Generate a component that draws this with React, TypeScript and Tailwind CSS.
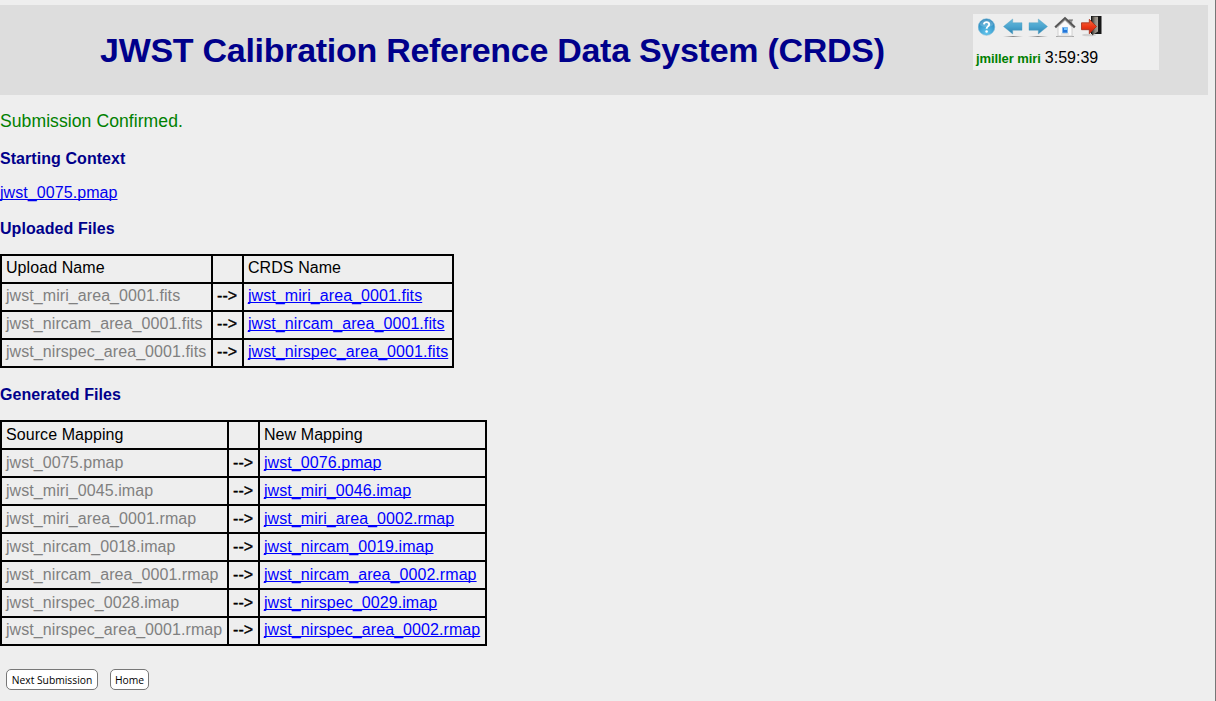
type Row = [string, string];

const uploaded: Row[] = [
  ['jwst_miri_area_0001.fits', 'jwst_miri_area_0001.fits'],
  ['jwst_nircam_area_0001.fits', 'jwst_nircam_area_0001.fits'],
  ['jwst_nirspec_area_0001.fits', 'jwst_nirspec_area_0001.fits'],
];

const generated: Row[] = [
  ['jwst_0075.pmap', 'jwst_0076.pmap'],
  ['jwst_miri_0045.imap', 'jwst_miri_0046.imap'],
  ['jwst_miri_area_0001.rmap', 'jwst_miri_area_0002.rmap'],
  ['jwst_nircam_0018.imap', 'jwst_nircam_0019.imap'],
  ['jwst_nircam_area_0001.rmap', 'jwst_nircam_area_0002.rmap'],
  ['jwst_nirspec_0028.imap', 'jwst_nirspec_0029.imap'],
  ['jwst_nirspec_area_0001.rmap', 'jwst_nirspec_area_0002.rmap'],
];

function Heading({ children, className }: { children: string; className: string }) {
  return <h3 className={`text-base leading-5 font-bold tracking-[0.06px] text-[#00008b] ${className}`}>{children}</h3>;
}

function FileTable({ left, right, rows, className, cols, low = false }: { left: string; right: string; rows: Row[]; className: string; cols: [string, string, string]; low?: boolean }) {
  const base = 'h-7 border-2 border-black p-0 pl-[4px] leading-5 whitespace-nowrap';
  const pad = (last: boolean) => (low && !last ? 'pb-0' : 'pb-[2px]');
  return (
    <table className={`table-fixed border-collapse tracking-[0.07px] ${className}`}>
      <colgroup>
        {cols.map((c, i) => (
          <col key={i} className={c} />
        ))}
      </colgroup>
      <tbody>
        <tr>
          <td className={`${base} ${pad(false)}`}>{left}</td>
          <td className={`${base} ${pad(false)}`} />
          <td className={`${base} ${pad(false)}`}>{right}</td>
        </tr>
        {rows.map(([from, to], i) => {
          const cell = `${base} ${pad(i === rows.length - 1)}`;
          return (
            <tr key={from}>
              <td className={`${cell} text-[#808080]`}>{from}</td>
              <td className={`${cell} [-webkit-text-stroke:0.35px_black]`}>{'-->'}</td>
              <td className={cell}>
                <a href="#" className="text-[#0000ff] underline [text-decoration-skip-ink:none]">{to}</a>
              </td>
            </tr>
          );
        })}
      </tbody>
    </table>
  );
}

function HelpIcon() {
  return (
    <svg width="18" height="20" viewBox="0 0 18 20">
      <defs>
        <radialGradient id="help" cx=".5" cy=".85" r=".8">
          <stop offset="0" stopColor="#62c5ed" />
          <stop offset=".65" stopColor="#3b9dce" />
          <stop offset="1" stopColor="#237fb6" />
        </radialGradient>
      </defs>
      <circle cx="8.5" cy="10" r="8.3" fill="url(#help)" stroke="#77b8d7" strokeWidth=".6" />
      <path d="M1.5 8a7.2 7.2 0 0 1 14 0Q8.5 12 1.5 8" fill="#fff" opacity=".2" />
      <path d="M5.9 7.4C6.2 4.3 11.3 4.4 11.2 7.4C11.1 9.5 8.7 9.3 8.6 11.8" fill="none" stroke="#fff" strokeWidth="1.9" />
      <circle cx="8.6" cy="14.4" r="1.25" fill="#fff" />
    </svg>
  );
}

function ArrowIcon({ forward = false }: { forward?: boolean }) {
  const id = forward ? 'forward' : 'back';
  return (
    <svg width="20" height="22" viewBox="0 0 20 22">
      <defs>
        <linearGradient id={id} x1="0" y1="0" x2="0" y2="1">
          <stop offset="0" stopColor="#69b9da" />
          <stop offset=".5" stopColor="#4ba5cf" />
          <stop offset="1" stopColor="#2d82b0" />
        </linearGradient>
        <linearGradient id={`${id}-shade`}>
          <stop offset="0" stopColor="#999" stopOpacity="0" />
          <stop offset=".5" stopColor="#888" />
          <stop offset="1" stopColor="#999" stopOpacity="0" />
        </linearGradient>
      </defs>
      <path d="M0 19h20v1H0z" fill={`url(#${id}-shade)`} />
      <path d={forward ? 'M19.5 9.5L10.3 2v3.7H1v7.6h9.3V17z' : 'M.5 9.5L9.7 2v3.7H19v7.6H9.7V17z'} fill={`url(#${id})`} stroke="#4d9fc3" strokeWidth=".4" />
    </svg>
  );
}

function HomeIcon() {
  return (
    <svg width="22" height="22" viewBox="0 0 22 22">
      <path d="M2 20.5h18" stroke="#aaa" strokeWidth="1" />
      <path d="M15 4h3.2v7H15z" fill="#999" />
      <path d="M14.5 4h4.5" stroke="#666" />
      <path d="M4 11L11 4.5l7 6.5v9H4z" fill="#fafafa" stroke="#c6c6c6" strokeWidth=".8" />
      <path d="M1.2 11.4L11 2.3l9.8 9.1" fill="none" stroke="#555" strokeWidth="2.3" />
      <path d="M2.4 11.4L11 3.5l8.6 7.9" fill="none" stroke="#999" strokeWidth=".6" />
      <path d="M8.5 11.5h5v5.5h-5z" fill="#2475d9" stroke="#79b5ec" />
      <path d="M10 12h3v2h-3z" fill="#70c5ff" />
      <path d="M7 18h8" stroke="#d5d5d5" />
    </svg>
  );
}

function ExitIcon() {
  return (
    <svg width="22" height="22" viewBox="0 0 22 22">
      <defs>
        <linearGradient id="door">
          <stop offset="0" stopColor="#383530" />
          <stop offset=".5" stopColor="#8d877e" />
          <stop offset="1" stopColor="#aaa49a" />
        </linearGradient>
        <linearGradient id="exit" x1="0" y1="0" x2="0" y2="1">
          <stop offset="0" stopColor="#f36e42" />
          <stop offset=".5" stopColor="#ed3918" />
          <stop offset="1" stopColor="#bd1d0b" />
        </linearGradient>
      </defs>
      <ellipse cx="9" cy="20" rx="7" ry="1.3" fill="#d0d0d0" />
      <path d="M11 1h10.5v18H11z" fill="#171717" />
      <path d="M12 1.5l6 .2v14.8l-6 4z" fill="url(#door)" />
      <path d="M1.5 7.8h7.8V4.3l7.2 7.2-7.2 7.2v-4H1.5z" fill="url(#exit)" stroke="#a52b17" strokeWidth=".8" />
    </svg>
  );
}

export default function App() {
  return (
    <div className="flex h-[701px] w-[1216px] overflow-hidden bg-[#eeeeee] font-['Liberation_Sans',Arial,sans-serif] text-base text-black">
      <main className="w-[1215px] shrink-0 pt-[5px]">
        <header className="flex h-[90px] w-[1208px] items-start bg-[#dddddd] pl-[100px]">
          <h1 className="w-[873px] shrink-0 pt-[25px] text-[34px] leading-10 font-bold tracking-[-0.28px] whitespace-nowrap text-[#00008b]">
            JWST Calibration Reference Data System (CRDS)
          </h1>
          <div className="mt-[9px] h-14 w-[186px] bg-[#eeeeee] pl-[3px]">
            <div className="flex h-[34px] items-start">
              <span className="mt-[3px] ml-[2px]"><HelpIcon /></span>
              <span className="mt-[3px] ml-[7px]"><ArrowIcon /></span>
              <span className="mt-[3px] ml-[5px]"><ArrowIcon forward /></span>
              <span className="mt-[2px] ml-[6px]"><HomeIcon /></span>
              <span className="mt-px ml-[4px]"><ExitIcon /></span>
            </div>
            <div className="flex items-baseline gap-1 leading-5 whitespace-nowrap">
              <span className="text-[13px] font-bold tracking-[-0.08px] text-[#008000]">jmiller miri</span>
              <span>3:59:39</span>
            </div>
          </div>
        </header>

        <p className="mt-[15px] text-[17.6px] leading-[22px] tracking-[0.05px] text-[#008000]">Submission Confirmed.</p>
        <Heading className="mt-[17px]">Starting Context</Heading>
        <a href="#" className="mt-[14px] block w-max leading-5 tracking-[0.07px] text-[#0000ee] underline [text-decoration-skip-ink:none]">jwst_0075.pmap</a>
        <Heading className="mt-4">Uploaded Files</Heading>
        <FileTable left="Upload Name" right="CRDS Name" rows={uploaded} className="mt-[15px] w-[454px]" cols={['w-[211px]', 'w-[31px]', 'w-[210px]']} />
        <Heading className="mt-[17px]">Generated Files</Heading>
        <FileTable low left="Source Mapping" right="New Mapping" rows={generated} className="mt-[15px] w-[487px]" cols={['w-[227px]', 'w-[31px]', 'w-[227px]']} />
        <div className="mt-[23px] ml-[6px] flex gap-3 font-['Open_Sans',sans-serif] text-[10.3px] leading-[18px] font-medium text-black">
          <button className="h-[21px] w-[92px] rounded-[5px] border border-[#777777] bg-white whitespace-nowrap">Next Submission</button>
          <button className="h-[21px] w-[39px] rounded-[5px] border border-[#777777] bg-white">Home</button>
        </div>
      </main>
      <div className="w-px shrink-0 bg-[#777777]" />
    </div>
  );
}
